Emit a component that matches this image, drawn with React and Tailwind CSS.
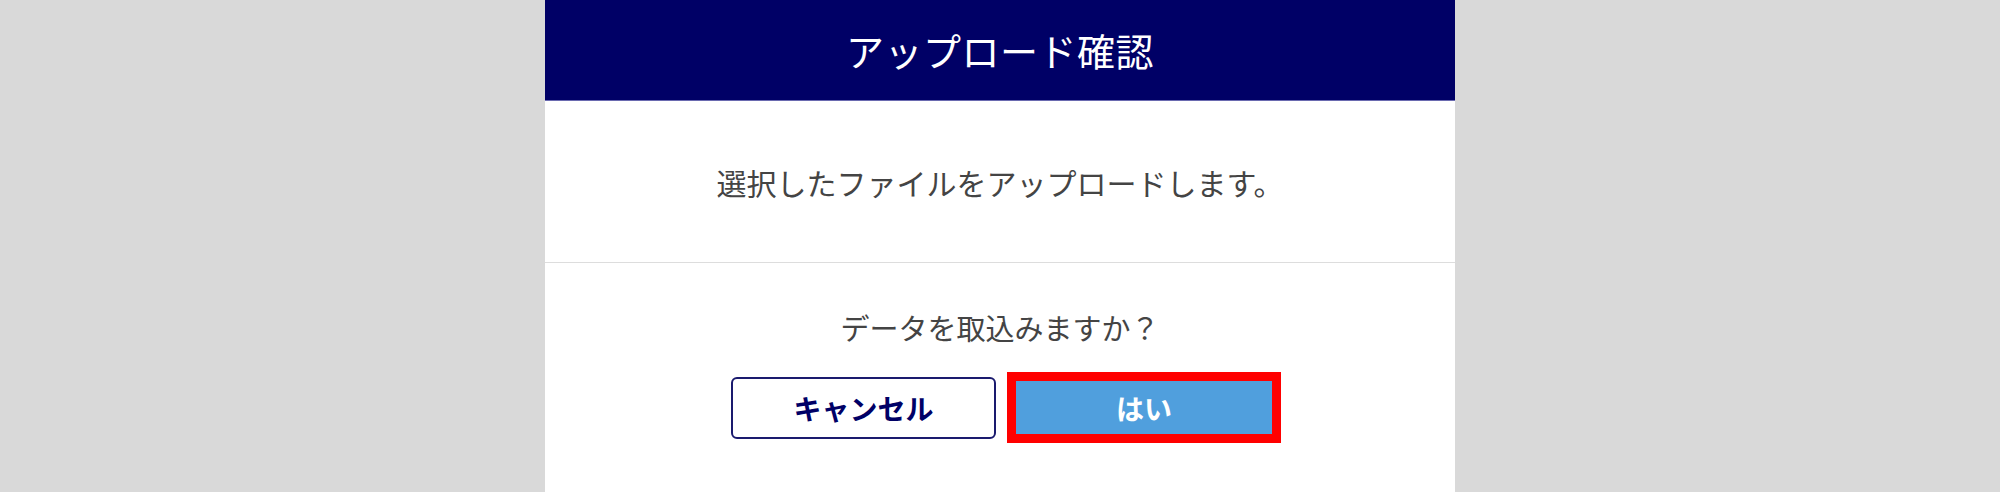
export default function App() {
  return (
    <div
      className="w-[2000px] h-[492px] bg-[#d9d9d9] flex justify-center overflow-hidden"
      style={{ fontFamily: '"Noto Sans CJK JP", "Noto Sans", sans-serif' }}
    >
      <div className="w-[910px] h-full bg-white flex flex-col">
        {/* header */}
        <div className="h-[101px] bg-[#000066] border-b border-[#6a6ab0] flex items-center justify-center">
          <h1 className="text-white text-[38px] leading-none tracking-[0.5px]">アップロード確認</h1>
        </div>

        {/* message */}
        <div className="h-[162px] flex items-center justify-center border-b border-[#dddddd]">
          <p className="text-[#444] text-[30px] leading-none">選択したファイルをアップロードします。</p>
        </div>

        {/* confirm */}
        <div className="flex flex-col pt-[46px]">
          <p className="text-center text-[#444] text-[29px] leading-[36px]">データを取込みますか？</p>
          <div className="flex items-center gap-[11px] pl-[186px] mt-[27px]">
            <button className="w-[265px] h-[62px] rounded-[6px] border-2 border-[#1a1a6e] bg-white text-[#000066] text-[28px] font-bold">
              キャンセル
            </button>
            <div className="w-[274px] h-[71px] border-[9px] border-[#ff0000] bg-white flex">
              <button className="flex-1 bg-[#509fdd] text-white text-[28px] font-bold">はい</button>
            </div>
          </div>
        </div>
      </div>
    </div>
  )
}
